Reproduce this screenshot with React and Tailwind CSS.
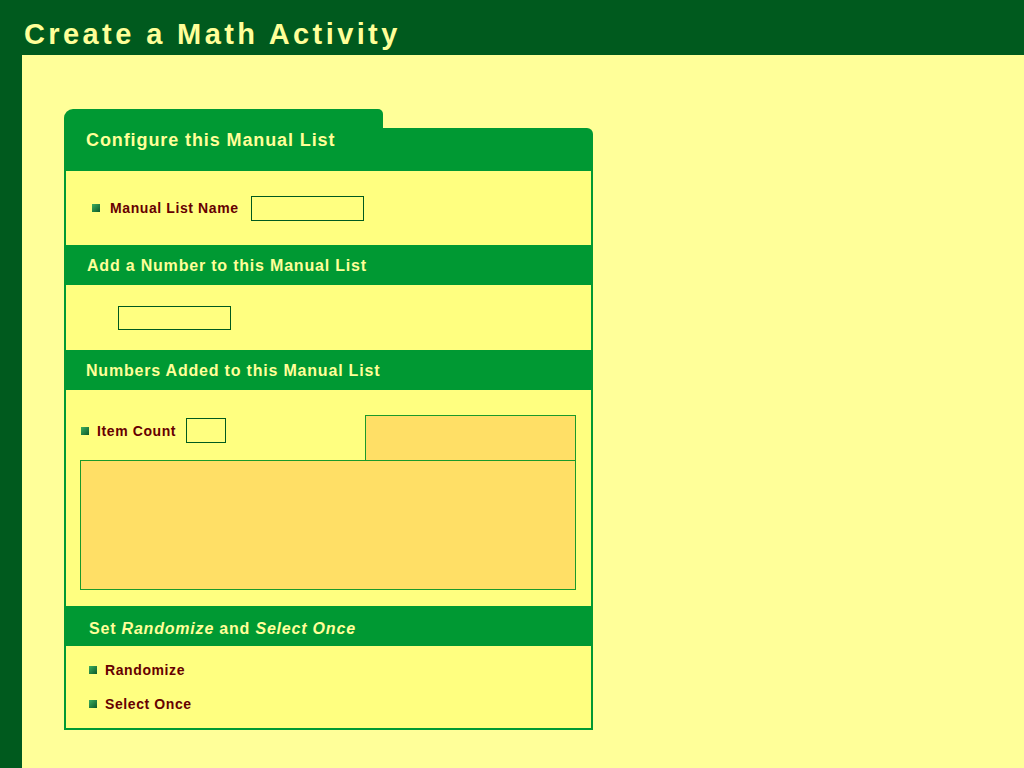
import React from 'react';

const font = { fontFamily: '"Liberation Sans", Arial, sans-serif' };

function Bullet() {
    return <span className="block w-[8px] h-[8px] shrink-0 bg-gradient-to-br from-[#3cb060] to-[#0b5a2a]" />;
}

function Label({ children }) {
    return <span className="text-[14px] leading-none font-bold tracking-[0.6px] text-[#660000]">{children}</span>;
}

function SectionHeader({ children, className = '' }) {
    return (
        <div className={'h-[40px] flex items-center bg-[#009933] text-[16px] leading-none font-bold tracking-[0.8px] text-[#ffff99] ' + className}>
            {children}
        </div>
    );
}

function Box({ className = '' }) {
    return <div className={'border-[#1a9a2a] bg-[#ffdf66] ' + className} />;
}

export default function App() {
    return (
        <div className="min-h-[768px] flex flex-col bg-[#ffff99]" style={font}>
            <div className="h-[55px] bg-[#005a1e] pl-[24px] pt-[20px]">
                <h1 className="text-[29px] leading-none font-bold tracking-[3.4px] text-[#ffff99]">Create a Math Activity</h1>
            </div>
            <div className="flex flex-1">
                <div className="w-[22px] bg-[#005a1e]" />
                <div className="flex-1 pl-[42px] pt-[54px] pb-[38px]">
                    <div className="w-[529px]">
                        {/* tab header */}
                        <div className="flex">
                            <div className="w-[319px] h-[62px] bg-[#009933] rounded-tl-[9px] rounded-tr-[5px] pl-[22px] pt-[20px]">
                                <span className="text-[18px] leading-none font-bold tracking-[0.9px] text-[#ffff99] whitespace-nowrap">Configure this Manual List</span>
                            </div>
                            <div className="flex-1 mt-[19px] h-[43px] bg-[#009933] rounded-tr-[6px]" />
                        </div>

                        <div className="border-x-2 border-b-2 border-[#009933] bg-[#ffff80]">
                            <div className="h-[74px] flex items-center pl-[26px]">
                                <Bullet />
                                <span className="ml-[10px]"><Label>Manual List Name</Label></span>
                                <input className="ml-[12px] w-[113px] h-[25px] border border-[#005a1e] bg-transparent outline-none" />
                            </div>

                            <SectionHeader className="pl-[21px] pt-[1px]">Add a Number to this Manual List</SectionHeader>
                            <div className="h-[65px] pl-[52px] pt-[21px]">
                                <input className="w-[113px] h-[24px] border border-[#005a1e] bg-transparent outline-none" />
                            </div>

                            <SectionHeader className="pl-[20px] pt-[2px]">Numbers Added to this Manual List</SectionHeader>
                            <div className="h-[216px] pl-[14px] pr-[15px] pt-[25px]">
                                <div className="flex items-start justify-between h-[45px]">
                                    <div className="flex items-center pt-[3px] pl-px">
                                        <Bullet />
                                        <span className="ml-[8px]"><Label>Item Count</Label></span>
                                        <input className="ml-[10px] w-[40px] h-[25px] border border-[#005a1e] bg-transparent outline-none" />
                                    </div>
                                    <Box className="w-[211px] h-[45px] border-x border-t" />
                                </div>
                                <Box className="h-[130px] border" />
                            </div>

                            <SectionHeader className="pl-[23px] pt-[5px]">
                                <span>Set <i>Randomize</i> and <i>Select Once</i></span>
                            </SectionHeader>
                            <div className="h-[82px] flex flex-col pl-[23px] pt-[14px] gap-[13px]">
                                <div className="h-[20px] flex items-center">
                                    <Bullet />
                                    <span className="ml-[8px]"><Label>Randomize</Label></span>
                                </div>
                                <div className="h-[20px] flex items-center pt-[1px]">
                                    <Bullet />
                                    <span className="ml-[8px]"><Label>Select Once</Label></span>
                                </div>
                            </div>
                        </div>
                    </div>
                </div>
            </div>
        </div>
    );
}
